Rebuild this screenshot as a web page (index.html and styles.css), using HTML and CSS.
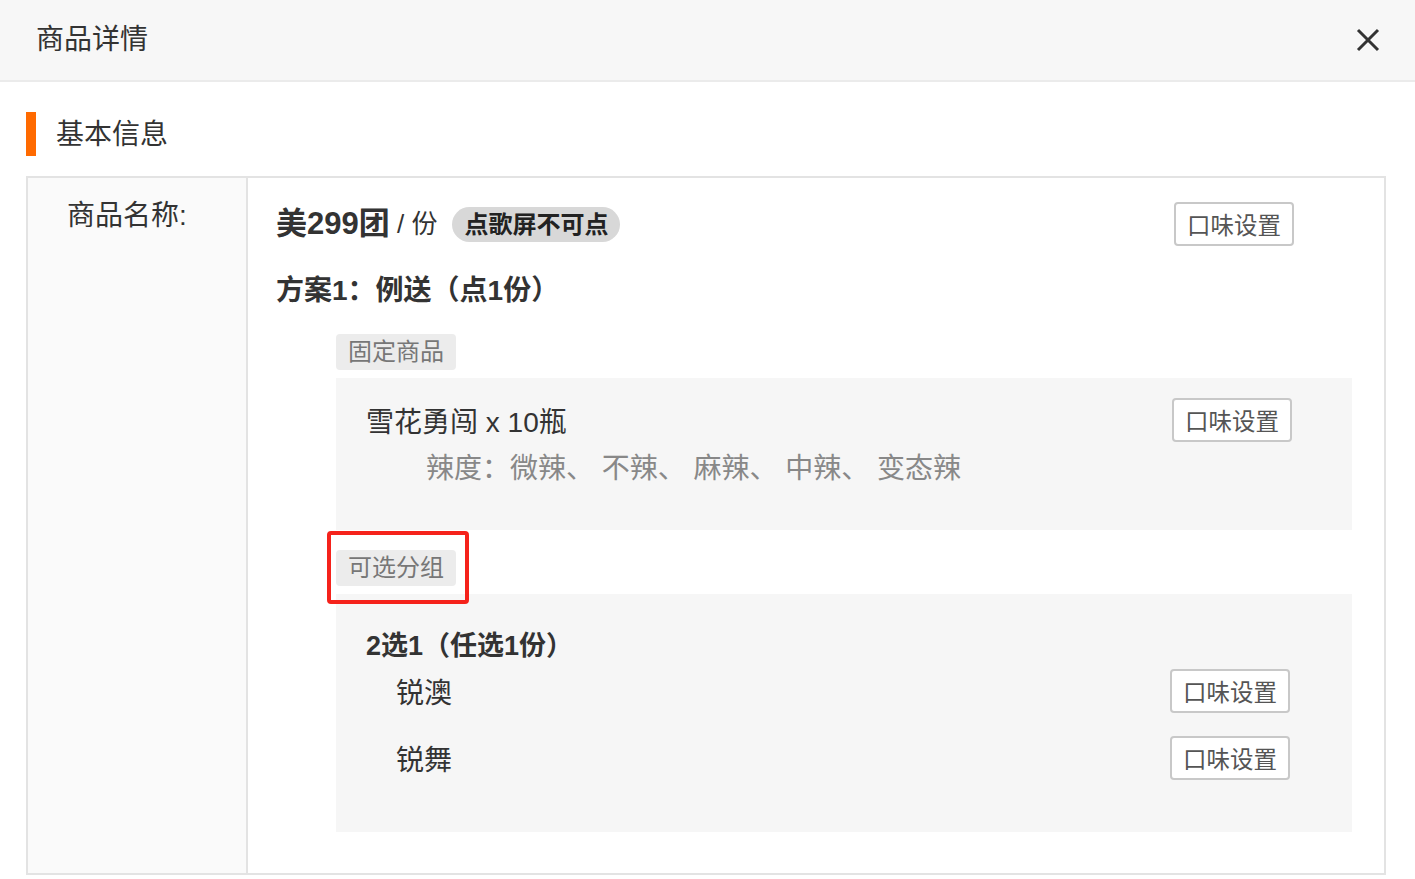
FILE: index.html
```html
<!DOCTYPE html>
<html lang="zh-CN">
<head>
    <meta charset="UTF-8">
    <meta name="viewport" content="width=device-width, initial-scale=1.0">
    <title>商品详情</title>
    <link rel="stylesheet" href="styles.css">
</head>
<body>

    <header class="modalHeader">
        <h2>商品详情</h2>
        <span class="closeBtn">
            <svg width="24" height="24" viewBox="0 0 24 24">
                <path d="M2 2 L22 22 M22 2 L2 22" stroke="#333" stroke-width="3" fill="none" />
            </svg>
        </span>
    </header>

    <section class="modalBody">
        <h3 class="sectionTitle">基本信息</h3>

        <div class="infoTable">
            <div class="infoLabel">商品名称:</div>
            <div class="infoValue">
                <div class="goodsRow">
                    <div class="goodsName"><b>美299团</b> / 份<span class="badge">点歌屏不可点</span></div>
                    <button class="tasteBtn">口味设置</button>
                </div>

                <div class="planTitle">方案1：例送（点1份）</div>

                <!-- 固定商品 -->
                <div class="groupTag">固定商品</div>
                <div class="groupBox fixedBox">
                    <div class="itemRow">
                        <span class="itemName">雪花勇闯 x 10瓶</span>
                        <button class="tasteBtn">口味设置</button>
                    </div>
                    <div class="spiceLine">辣度：微辣、 不辣、 麻辣、 中辣、 变态辣</div>
                </div>

                <!-- 可选分组 -->
                <div class="groupTag marked">可选分组<span class="redMark"></span></div>
                <div class="groupBox optionBox">
                    <div class="optionTitle">2选1（任选1份）</div>
                    <div class="itemRow option">
                        <span class="itemName">锐澳</span>
                        <button class="tasteBtn">口味设置</button>
                    </div>
                    <div class="itemRow option">
                        <span class="itemName">锐舞</span>
                        <button class="tasteBtn">口味设置</button>
                    </div>
                </div>
            </div>
        </div>
    </section>

</body>
</html>
```

FILE: styles.css
```css
body {
    font-family: "Liberation Sans", "Noto Sans CJK SC", sans-serif;
    margin: 0;
    padding: 0;
    background-color: #fff;
    color: #333;
}

.modalHeader {
    height: 80px;
    background-color: #f7f7f7;
    border-bottom: 2px solid #ebebeb;
    display: flex;
    align-items: center;
    justify-content: space-between;
    padding: 0 35px 0 36px;
}

.modalHeader h2 {
    margin: 0;
    font-size: 28px;
    font-weight: normal;
    line-height: 36px;
}

.closeBtn {
    display: flex;
    width: 24px;
    height: 24px;
}

.modalBody {
    padding: 30px 29px 0 26px;
}

.sectionTitle {
    margin: 0 0 20px 0;
    height: 44px;
    line-height: 46px;
    border-left: 10px solid #ff6a00;
    padding-left: 20px;
    font-size: 28px;
    font-weight: normal;
}

.infoTable {
    display: flex;
    border: 2px solid #e3e3e3;
}

.infoLabel {
    width: 220px;
    flex-shrink: 0;
    background-color: #fafafa;
    border-right: 2px solid #e3e3e3;
    padding: 20px 0 0 39px;
    box-sizing: border-box;
    font-size: 28px;
    line-height: 36px;
}

.infoValue {
    flex: 1;
    padding: 24px 32px 41px 28px;
}

.goodsRow {
    display: flex;
    align-items: center;
    justify-content: space-between;
    height: 44px;
    padding-right: 58px;
}

.goodsName {
    font-size: 26px;
    line-height: 44px;
    display: flex;
    align-items: center;
    white-space: pre;
}

.goodsName b {
    font-size: 31px;
}

.badge {
    margin-left: 15px;
    height: 35px;
    line-height: 35px;
    padding: 0 12px;
    border-radius: 18px;
    background-color: #d8d8d8;
    color: #222;
    font-size: 24px;
    font-weight: bold;
}

.tasteBtn {
    font-family: inherit;
    width: 120px;
    height: 44px;
    padding: 0;
    border: 2px solid #c8c8c8;
    border-radius: 4px;
    background-color: #fff;
    color: #555;
    font-size: 23.5px;
    cursor: pointer;
}

.planTitle {
    margin-top: 26px;
    font-size: 28px;
    font-weight: bold;
    line-height: 38px;
}

.groupTag {
    position: relative;
    display: inline-block;
    margin: 24px 0 8px 60px;
    width: 120px;
    height: 36px;
    line-height: 36px;
    text-align: center;
    background-color: #ececec;
    border-radius: 4px;
    color: #777;
    font-size: 24px;
}

.groupTag.marked {
    margin-top: 20px;
}

/* 标注框 */
.redMark {
    position: absolute;
    top: -19px;
    left: -9px;
    width: 142px;
    height: 73px;
    box-sizing: border-box;
    border: 4px solid #f5221b;
    border-radius: 4px;
}

.groupBox {
    margin-left: 60px;
    background-color: #f6f6f6;
    padding-left: 30px;
}

.fixedBox {
    padding-top: 20px;
    padding-bottom: 41px;
    padding-right: 60px;
}

.itemRow {
    display: flex;
    align-items: center;
    justify-content: space-between;
    height: 44px;
}

.itemName {
    font-size: 28px;
}

.spiceLine {
    margin-top: 7px;
    padding-left: 60px;
    font-size: 28px;
    line-height: 40px;
    color: #888;
    white-space: pre;
}

.optionBox {
    padding-top: 32px;
    padding-bottom: 52px;
    padding-right: 62px;
}

.optionTitle {
    font-size: 27px;
    font-weight: bold;
    line-height: 40px;
}

.itemRow.option {
    padding-left: 30px;
    margin-top: 3px;
}

.itemRow.option + .itemRow.option {
    margin-top: 23px;
}
```
